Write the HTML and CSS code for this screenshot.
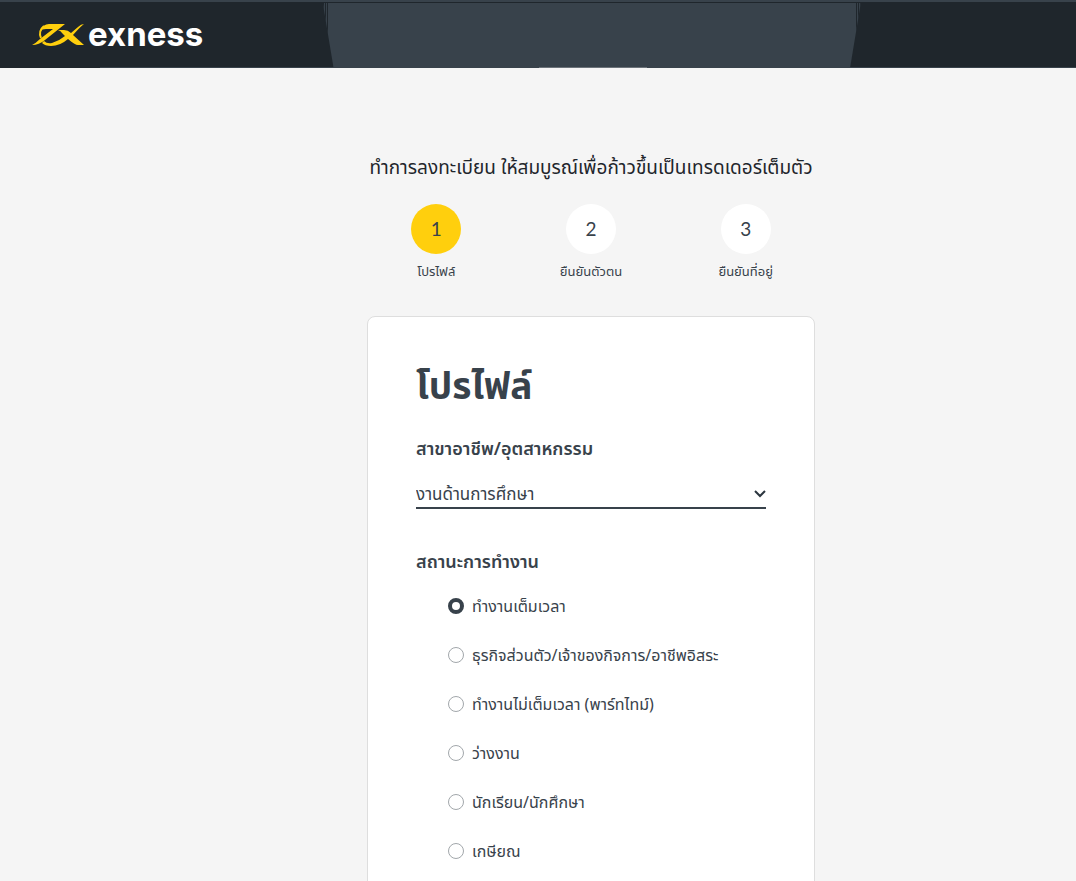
FILE: index.html
```html
<!DOCTYPE html>
<html lang="th">
<head>
<meta charset="utf-8">
<meta name="viewport" content="width=device-width, initial-scale=1">
<title>Exness</title>
<link rel="stylesheet" href="styles.css">
</head>
<body>
<header class="header">
  <div class="header-glow"></div>
  <a class="brand" href="#" aria-label="exness">
    <svg class="brand-mark" viewBox="0 0 52 22" width="52" height="22" aria-hidden="true">
      <path fill="#ffcf0d" d="M0 21Q4 19 8 15L21 5H14Q10 5 8 7Q11 0 17 0H33L13 16Q7 21 0 21Z"/>
      <path fill="#ffcf0d" d="M26 6H32Q36 6 39 9L46 3Q49 0 52 0Q49 2 41 11L52 21H46Q43 21 36 15Q28 22 19 22Q13 22 10 19L12 17Q15 20 20 19Q27 17 33 12L30 9Q29 7 26 6Z"/>
      <path fill="none" stroke="#ffcf0d" stroke-width="2" d="M12 2Q6 7 9 14"/>
    </svg>
    <span class="brand-name">exness</span>
  </a>
</header>
<main class="main">
  <p class="lead">ทำการลงทะเบียน ให้สมบูรณ์เพื่อก้าวขึ้นเป็นเทรดเดอร์เต็มตัว</p>
  <ol class="steps">
    <li class="step step-active"><span class="step-number">1</span><span class="step-label">โปรไฟล์</span></li>
    <li class="step"><span class="step-number">2</span><span class="step-label">ยืนยันตัวตน</span></li>
    <li class="step"><span class="step-number">3</span><span class="step-label">ยืนยันที่อยู่</span></li>
  </ol>
  <form class="card">
    <h1 class="title">โปรไฟล์</h1>
    <label class="heading" for="industry">สาขาอาชีพ/อุตสาหกรรม</label>
    <div class="select-wrap">
      <select class="select" id="industry"><option>งานด้านการศึกษา</option></select>
      <svg class="chevron" viewBox="0 0 12 8" width="12" height="8" aria-hidden="true"><path d="M1 1l5 5 5-5" fill="none" stroke="#2c363f" stroke-width="2"/></svg>
    </div>
    <fieldset class="group">
      <legend class="heading">สถานะการทำงาน</legend>
      <div class="options">
        <label class="option"><input class="radio" type="radio" name="status" checked><span>ทำงานเต็มเวลา</span></label>
        <label class="option"><input class="radio" type="radio" name="status"><span>ธุรกิจส่วนตัว/เจ้าของกิจการ/อาชีพอิสระ</span></label>
        <label class="option"><input class="radio" type="radio" name="status"><span>ทำงานไม่เต็มเวลา (พาร์ทไทม์)</span></label>
        <label class="option"><input class="radio" type="radio" name="status"><span>ว่างงาน</span></label>
        <label class="option"><input class="radio" type="radio" name="status"><span>นักเรียน/นักศึกษา</span></label>
        <label class="option"><input class="radio" type="radio" name="status"><span>เกษียณ</span></label>
      </div>
    </fieldset>
  </form>
</main>
</body>
</html>
```
FILE: styles.css
```css
* { box-sizing: border-box; }
body {
  margin: 0;
  background: #f5f5f5;
  color: #38424b;
  font-family: "Noto Sans", "Noto Sans Thai", sans-serif;
  font-size: 16px;
  line-height: 24px;
}
.header {
  position: relative;
  display: flex;
  align-items: center;
  height: 68px;
  padding: 0 32px;
  background: #1f262c;
  border-top: 2px solid #38424b;
}
.header-glow {
  position: absolute;
  inset: 1px 20% 0 30%;
  background:
    repeating-linear-gradient(90deg, #1f262c 0 1px, transparent 1px 2px) left / 5px 100% no-repeat,
    repeating-linear-gradient(90deg, #1f262c 0 1px, transparent 1px 2px) right / 5px 100% no-repeat,
    #38424b;
  clip-path: polygon(0 0, 100% 0, 98% 100%, 2% 100%);
}
.header::after {
  content: "";
  position: absolute;
  inset: auto 0 0 100px;
  height: 1px;
  background: linear-gradient(90deg, #38424b 45%, #6c737a 45% 56%, #38424b 56%);
}
.brand {
  position: relative;
  display: flex;
  align-items: center;
  gap: 4px;
  color: #fff;
  text-decoration: none;
}
.brand-name {
  padding-bottom: 2px;
  font: 700 33px/36px Inter, sans-serif;
}
.main {
  width: 554px;
  max-width: 100%;
  margin: 0 auto;
  padding: 83px 0 0 106px;
}
.lead {
  display: flex;
  justify-content: center;
  margin: 0;
  font-size: 19px;
  line-height: 32px;
  white-space: nowrap;
  color: #1f262c;
}
.steps {
  display: grid;
  grid-template-columns: repeat(3, 1fr);
  margin: 21px -8px 33px;
  padding: 0;
  list-style: none;
}
.step {
  display: flex;
  flex-direction: column;
  align-items: center;
  gap: 5px;
}
.step-number {
  display: grid;
  place-items: center;
  width: 50px;
  height: 50px;
  border-radius: 50%;
  background: #fff;
  font: 19px/24px Lato, sans-serif;
}
.step-active .step-number { background: #ffcf0d; }
.step-label { font-size: 13px; }
.card {
  padding: 44px 48px;
  background: #fff;
  border: 1px solid #dedede;
  border-radius: 8px;
}
.title {
  margin: 0 0 27px;
  font-size: 37px;
  line-height: 48px;
}
.heading {
  display: block;
  padding: 0;
  font-size: 18px;
  font-weight: 600;
}
.select-wrap {
  display: grid;
  align-items: center;
  margin: 21px 0 40px;
  border-bottom: 2px solid #38424b;
}
.select {
  grid-area: 1 / 1;
  width: 100%;
  height: 26px;
  padding: 0;
  border: 0;
  background: transparent;
  color: inherit;
  font: inherit;
  font-size: 17px;
  line-height: 26px;
  appearance: none;
}
.chevron {
  grid-area: 1 / 1;
  justify-self: end;
  pointer-events: none;
}
.group {
  margin: 0;
  padding: 0;
  border: 0;
}
.options {
  display: grid;
  gap: 25px;
  padding: 21px 0 0 32px;
}
.option {
  display: flex;
  align-items: center;
  gap: 8px;
  white-space: nowrap;
}
.radio {
  appearance: none;
  flex: none;
  width: 16px;
  height: 16px;
  margin: 0;
  border: 1px solid #a2a7ab;
  border-radius: 50%;
}
.radio:checked { border: 4px solid #38424b; }
```
